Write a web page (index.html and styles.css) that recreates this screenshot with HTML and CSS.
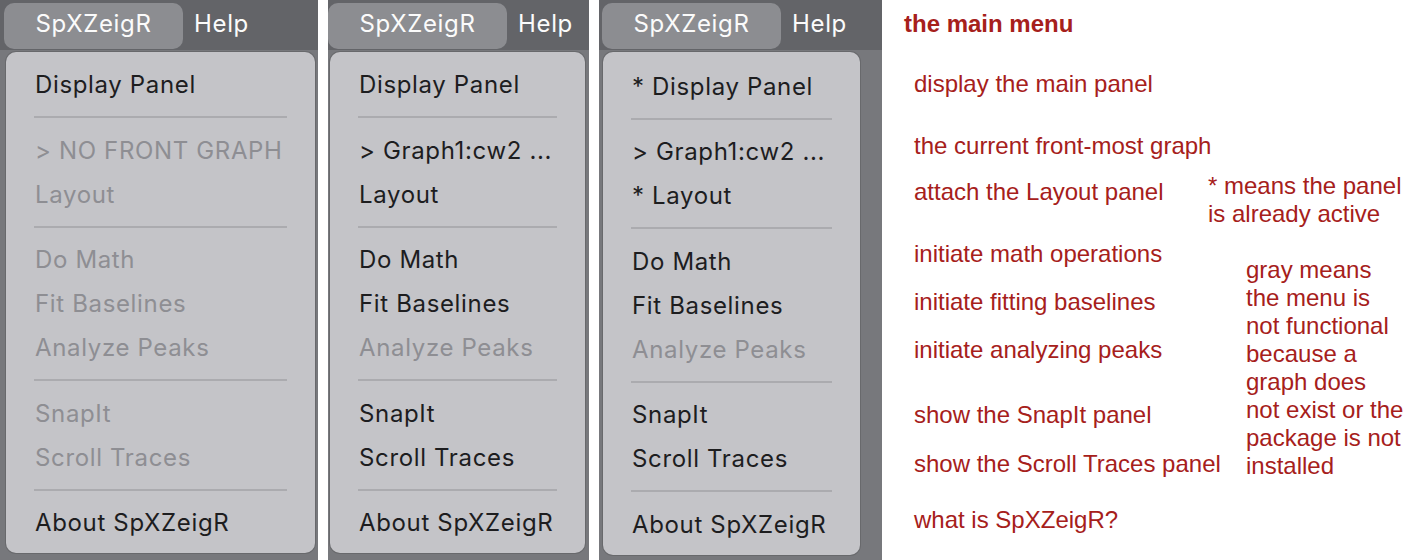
FILE: index.html
```html
<!DOCTYPE html>
<html>
<head>
<meta charset="UTF-8">
<title>SpXZeigR main menu</title>
<link rel="stylesheet" href="styles.css">
</head>
<body>
	<div class="page">
		<div class="shot shot-one">
			<div class="menubar">
				<span class="menubar-app">SpXZeigR</span>
				<span class="menubar-item">Help</span>
			</div>
			<div class="menu">
				<div class="menu-item">Display Panel</div>
				<div class="menu-sep"></div>
				<div class="menu-item off">&gt; NO FRONT GRAPH</div>
				<div class="menu-item off">Layout</div>
				<div class="menu-sep"></div>
				<div class="menu-item off">Do Math</div>
				<div class="menu-item off">Fit Baselines</div>
				<div class="menu-item off">Analyze Peaks</div>
				<div class="menu-sep"></div>
				<div class="menu-item off">SnapIt</div>
				<div class="menu-item off">Scroll Traces</div>
				<div class="menu-sep"></div>
				<div class="menu-item">About SpXZeigR</div>
			</div>
		</div>

		<div class="shot shot-two">
			<div class="menubar">
				<span class="menubar-app">SpXZeigR</span>
				<span class="menubar-item">Help</span>
			</div>
			<div class="menu">
				<div class="menu-item">Display Panel</div>
				<div class="menu-sep"></div>
				<div class="menu-item">&gt; Graph1:cw2 ...</div>
				<div class="menu-item">Layout</div>
				<div class="menu-sep"></div>
				<div class="menu-item">Do Math</div>
				<div class="menu-item">Fit Baselines</div>
				<div class="menu-item off">Analyze Peaks</div>
				<div class="menu-sep"></div>
				<div class="menu-item">SnapIt</div>
				<div class="menu-item">Scroll Traces</div>
				<div class="menu-sep"></div>
				<div class="menu-item">About SpXZeigR</div>
			</div>
		</div>

		<div class="shot shot-three">
			<div class="menubar">
				<span class="menubar-app">SpXZeigR</span>
				<span class="menubar-item">Help</span>
			</div>
			<div class="menu">
				<div class="menu-item">* Display Panel</div>
				<div class="menu-sep"></div>
				<div class="menu-item">&gt; Graph1:cw2 ...</div>
				<div class="menu-item">* Layout</div>
				<div class="menu-sep"></div>
				<div class="menu-item">Do Math</div>
				<div class="menu-item">Fit Baselines</div>
				<div class="menu-item off">Analyze Peaks</div>
				<div class="menu-sep"></div>
				<div class="menu-item">SnapIt</div>
				<div class="menu-item">Scroll Traces</div>
				<div class="menu-sep"></div>
				<div class="menu-item">About SpXZeigR</div>
			</div>
		</div>

		<div class="notes">
			<div class="notes-main">
				<div class="notes-title">the main menu</div>
				<div class="note mt32">display the main panel</div>
				<div class="note mt34">the current front-most graph</div>
				<div class="note mt18">attach the Layout panel</div>
				<div class="note mt34">initiate math operations</div>
				<div class="note mt20">initiate fitting baselines</div>
				<div class="note mt20">initiate analyzing peaks</div>
				<div class="note mt37">show the SnapIt panel</div>
				<div class="note mt21">show the Scroll Traces panel</div>
				<div class="note mt28">what is SpXZeigR?</div>
			</div>
			<div class="notes-side">
				<div class="side-star">* means the panel<br>is already active</div>
				<div class="side-gray">gray means<br>the menu is<br>not functional<br>because a<br>graph does<br>not exist or the<br>package is not<br>installed</div>
			</div>
		</div>
	</div>
</body>
</html>
```

FILE: styles.css
```css
body {
	margin: 0;
	background-color: #ffffff;
}

.page {
	display: flex;
	height: 560px;
	overflow: hidden;
}

/* the three menu screenshots */
.shot {
	height: 560px;
	flex-shrink: 0;
	background-color: #77787c;
	font-family: Inter, "Noto Sans", sans-serif;
	font-size: 24px;
	letter-spacing: 0.65px;
}

.shot-one {
	width: 318px;
}

.shot-two {
	width: 261px;
	margin-left: 10px;
}

.shot-three {
	width: 283px;
	margin-left: 10px;
}

.menubar {
	height: 50px;
	box-sizing: border-box;
	padding-top: 3px;
	display: flex;
	align-items: flex-start;
	background-color: #636468;
	color: #fbfbfb;
}

.shot-one .menubar {
	padding-left: 4px;
}

.shot-three .menubar {
	padding-left: 3px;
}

.menubar-app {
	width: 179px;
	height: 46px;
	box-sizing: border-box;
	padding-bottom: 4px;
	line-height: 42px;
	text-align: center;
	border-radius: 10px;
	background-color: #8c8d91;
}

.menubar-item {
	margin-left: 11px;
	line-height: 42px;
}

.menu {
	margin-top: 2px;
	padding: 11px 0 8px;
	border-radius: 10px;
	background-color: #c4c4c8;
	box-shadow: 0 0 0 1px rgba(0, 0, 0, 0.12);
}

.shot-one .menu {
	margin-left: 6px;
	margin-right: 3px;
}

.shot-two .menu {
	margin-left: 2px;
	margin-right: 4px;
}

.shot-three .menu {
	margin-left: 4px;
	margin-right: 22px;
	padding: 12.5px 0 8.5px;
}

.menu-item {
	height: 44px;
	line-height: 44px;
	padding-left: 29px;
	white-space: nowrap;
	color: #1d1d1f;
}

.menu-item.off {
	color: #8e8e93;
}

.menu-sep {
	height: 2px;
	margin: 9px 28px 10.5px;
	background-color: #ababaf;
}

/* red annotations */
.notes {
	flex: 1;
	display: flex;
	padding: 10px 0 0 22px;
	font-family: "Liberation Sans", Arial, sans-serif;
	font-size: 24px;
	line-height: 28px;
	color: #a6201b;
	white-space: nowrap;
}

.notes-main {
	width: 304px;
	flex-shrink: 0;
	display: flex;
	flex-direction: column;
}

.notes-title {
	font-weight: bold;
}

.note {
	margin-left: 10px;
}

.mt18 { margin-top: 18px; }
.mt20 { margin-top: 20px; }
.mt21 { margin-top: 21px; }
.mt28 { margin-top: 28px; }
.mt32 { margin-top: 32px; }
.mt34 { margin-top: 34px; }
.mt37 { margin-top: 37px; }

.notes-side {
	display: flex;
	flex-direction: column;
}

.side-star {
	margin-top: 162px;
}

.side-gray {
	margin-top: 28px;
	margin-left: 38px;
}
```
